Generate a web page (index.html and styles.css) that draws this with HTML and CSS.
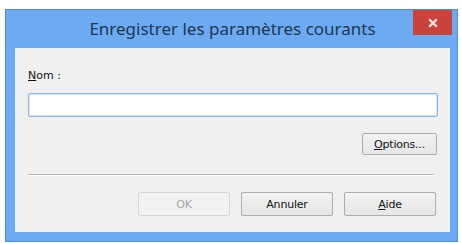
FILE: index.html
```html
<!DOCTYPE html>
<html lang="fr">
<head>
    <meta charset="UTF-8">
    <title>Enregistrer les paramètres courants</title>
    <link rel="stylesheet" href="styles.css">
</head>
<body>
    <div class="window">
        <div class="titlebar">
            <span class="title">Enregistrer les paramètres courants</span>
            <button class="close" type="button" aria-label="Fermer">
                <svg width="10" height="10" viewBox="0 0 10 10">
                    <path d="M2 2 L8 8 M8 2 L2 8" stroke="#fbe6e4" stroke-width="2.2" stroke-linecap="square"/>
                </svg>
            </button>
        </div>
        <div class="client">
            <label class="field-label" for="nom"><u>N</u>om :</label>
            <input class="field" id="nom" type="text">
            <div class="options-row">
                <button class="btn btn-options" type="button"><u>O</u>ptions...</button>
            </div>
            <div class="separator"></div>
            <div class="button-row">
                <button class="btn" type="button" disabled>OK</button>
                <button class="btn" type="button">Annuler</button>
                <button class="btn" type="button"><u>A</u>ide</button>
            </div>
        </div>
    </div>
</body>
</html>
```

FILE: styles.css
```css
* {
    box-sizing: border-box;
}
body {
    margin: 0;
    background: #fff;
    font-family: 'DejaVu Sans', Tahoma, sans-serif;
}
.window {
    margin: 9px 0 0 5px;
    width: 453px;
    height: 233px;
    border: 1px solid #4f8ad2;
    background: #6cabf2;
    padding: 0 7px 9px 9px;
    display: flex;
    flex-direction: column;
    position: relative;
}
.titlebar {
    height: 38px;
    display: flex;
    align-items: center;
    justify-content: center;
}
.title {
    font-family: 'Noto Sans', 'Open Sans', sans-serif;
    font-size: 17px;
    color: #1f3650;
    margin-top: -1px;
}
.close {
    position: absolute;
    top: 0;
    right: 5px;
    width: 39px;
    height: 25px;
    border: none;
    padding: 0;
    background: #c9433b;
    display: flex;
    align-items: center;
    justify-content: center;
}
.client {
    flex: 1;
    background: #f0f0f0;
    padding: 21px 12px 0 13px;
    font-size: 11px;
    color: #111;
}
.field-label {
    display: block;
    line-height: 14px;
    margin-bottom: 10px;
}
.field {
    display: block;
    width: 100%;
    height: 24px;
    border: 1px solid #8db4ea;
    box-shadow: inset 0 0 0 1px #d6e5f8;
    border-radius: 2px;
    background: #fff;
    outline: none;
}
.options-row {
    display: flex;
    justify-content: flex-end;
    margin-top: 16px;
    padding-right: 1px;
}
.btn {
    font-family: 'DejaVu Sans', Tahoma, sans-serif;
    font-size: 11px;
    letter-spacing: -0.2px;
    color: #111;
    width: 92px;
    height: 24px;
    padding: 0;
    border: 1px solid #acacac;
    border-radius: 2px;
    background: linear-gradient(#f2f2f2, #e6e6e6);
}
.btn:disabled {
    color: #a3a3a3;
    border-color: #d4d4d4;
    background: #f2f2f2;
}
.btn-options {
    width: 75px;
    height: 22px;
}
.separator {
    margin-top: 19px;
    margin-right: 4px;
    height: 2px;
    border-top: 1px solid #b4b4b4;
    border-bottom: 1px solid #fff;
}
.button-row {
    display: flex;
    justify-content: flex-end;
    gap: 11px;
    margin-top: 16px;
    padding-right: 2px;
}
```
